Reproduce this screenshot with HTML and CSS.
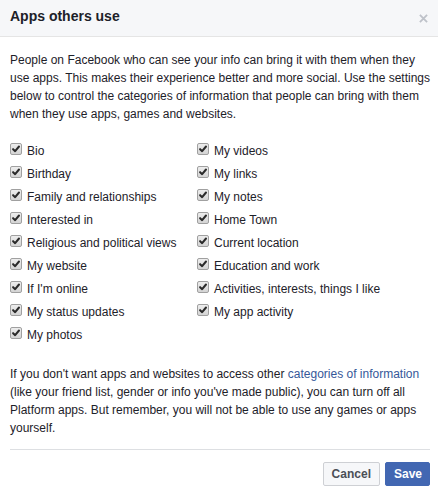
FILE: index.html
```html
<!DOCTYPE html>
<html>
<head>
<meta charset="utf-8">
<link rel="stylesheet" href="styles.css">
</head>
<body>
<div class="dialog">
  <div class="header">
    <h2 class="title">Apps others use</h2>
    <svg class="close" viewBox="0 0 10 10"><path d="M1 1 L9 9 M9 1 L1 9"/></svg>
  </div>
  <div class="content">
    <p class="text">People on Facebook who can see your info can bring it with them when they use apps. This makes their experience better and more social. Use the settings below to control the categories of information that people can bring with them when they use apps, games and websites.</p>
    <div class="grid">
      <div class="col">
        <div class="item"><span class="cb"><svg viewBox="0 0 12 12"><path d="M2.5 6.2 L5 8.6 L9.6 3"/></svg></span>Bio</div>
        <div class="item"><span class="cb"><svg viewBox="0 0 12 12"><path d="M2.5 6.2 L5 8.6 L9.6 3"/></svg></span>Birthday</div>
        <div class="item"><span class="cb"><svg viewBox="0 0 12 12"><path d="M2.5 6.2 L5 8.6 L9.6 3"/></svg></span>Family and relationships</div>
        <div class="item"><span class="cb"><svg viewBox="0 0 12 12"><path d="M2.5 6.2 L5 8.6 L9.6 3"/></svg></span>Interested in</div>
        <div class="item"><span class="cb"><svg viewBox="0 0 12 12"><path d="M2.5 6.2 L5 8.6 L9.6 3"/></svg></span>Religious and political views</div>
        <div class="item"><span class="cb"><svg viewBox="0 0 12 12"><path d="M2.5 6.2 L5 8.6 L9.6 3"/></svg></span>My website</div>
        <div class="item"><span class="cb"><svg viewBox="0 0 12 12"><path d="M2.5 6.2 L5 8.6 L9.6 3"/></svg></span>If I'm online</div>
        <div class="item"><span class="cb"><svg viewBox="0 0 12 12"><path d="M2.5 6.2 L5 8.6 L9.6 3"/></svg></span>My status updates</div>
        <div class="item"><span class="cb"><svg viewBox="0 0 12 12"><path d="M2.5 6.2 L5 8.6 L9.6 3"/></svg></span>My photos</div>
      </div>
      <div class="col">
        <div class="item"><span class="cb"><svg viewBox="0 0 12 12"><path d="M2.5 6.2 L5 8.6 L9.6 3"/></svg></span>My videos</div>
        <div class="item"><span class="cb"><svg viewBox="0 0 12 12"><path d="M2.5 6.2 L5 8.6 L9.6 3"/></svg></span>My links</div>
        <div class="item"><span class="cb"><svg viewBox="0 0 12 12"><path d="M2.5 6.2 L5 8.6 L9.6 3"/></svg></span>My notes</div>
        <div class="item"><span class="cb"><svg viewBox="0 0 12 12"><path d="M2.5 6.2 L5 8.6 L9.6 3"/></svg></span>Home Town</div>
        <div class="item"><span class="cb"><svg viewBox="0 0 12 12"><path d="M2.5 6.2 L5 8.6 L9.6 3"/></svg></span>Current location</div>
        <div class="item"><span class="cb"><svg viewBox="0 0 12 12"><path d="M2.5 6.2 L5 8.6 L9.6 3"/></svg></span>Education and work</div>
        <div class="item"><span class="cb"><svg viewBox="0 0 12 12"><path d="M2.5 6.2 L5 8.6 L9.6 3"/></svg></span>Activities, interests, things I like</div>
        <div class="item"><span class="cb"><svg viewBox="0 0 12 12"><path d="M2.5 6.2 L5 8.6 L9.6 3"/></svg></span>My app activity</div>
      </div>
    </div>
    <p class="text">If you don't want apps and websites to access other <a class="link" href="#">categories of information</a> (like your friend list, gender or info you've made public), you can turn off all Platform apps. But remember, you will not be able to use any games or apps yourself.</p>
  </div>
  <div class="footer">
    <button class="btn btn-cancel">Cancel</button>
    <button class="btn btn-save">Save</button>
  </div>
</div>
</body>
</html>
```

FILE: styles.css
```css
html, body {
  margin: 0;
  padding: 0;
  background: #fff;
}
body {
  font-family: "Liberation Sans", Arial, sans-serif;
  font-size: 12px;
  color: #1d2129;
}
.dialog {
  width: 438px;
}
.header {
  height: 36px;
  background: #f6f7f9;
  border-bottom: 1px solid #e5e5e5;
  display: flex;
  align-items: center;
  justify-content: space-between;
  padding: 0 10px 0 10px;
}
.title {
  margin: 0;
  font-size: 14px;
  font-weight: bold;
  color: #1d2129;
  line-height: 19px;
  padding-bottom: 3px;
}
.close {
  width: 9px;
  height: 9px;
  margin-top: 0;
}
.close path {
  stroke: #bec2c9;
  stroke-width: 2;
  fill: none;
}
.content {
  padding: 14px 2px 0 10px;
}
.text {
  margin: 0;
  line-height: 18px;
  color: #1d2129;
}
.link {
  color: #365899;
  text-decoration: none;
}
.grid {
  display: grid;
  grid-template-columns: 187px 1fr;
  margin: 16px 0 19px 0;
}
.item {
  height: 23px;
  display: flex;
  align-items: center;
  line-height: 14px;
}
.cb {
  width: 10px;
  height: 10px;
  margin-right: 5px;
  border: 1px solid #a0a0a0;
  border-radius: 2px;
  background: linear-gradient(#ededed, #d4d4d4);
  display: flex;
  align-items: center;
  justify-content: center;
  position: relative;
  top: -2px;
}
.cb svg {
  width: 10px;
  height: 10px;
}
.cb path {
  fill: none;
  stroke: #2a2a2a;
  stroke-width: 2.4;
  stroke-linecap: round;
  stroke-linejoin: round;
}
.footer {
  margin: 12px 8px 0 10px;
  border-top: 1px solid #dddfe2;
  padding-top: 12px;
  display: flex;
  justify-content: flex-end;
  gap: 5px;
}
.btn {
  font-family: "Liberation Sans", Arial, sans-serif;
  font-size: 12px;
  font-weight: bold;
  height: 24px;
  padding: 0 8px;
  border-radius: 2px;
  cursor: pointer;
}
.btn-cancel {
  background: #f6f7f9;
  border: 1px solid #ced0d4;
  color: #4b4f56;
}
.btn-save {
  background: #4267b2;
  border: 1px solid #4267b2;
  color: #fff;
  padding: 0 7px 0 8px;
}
```
